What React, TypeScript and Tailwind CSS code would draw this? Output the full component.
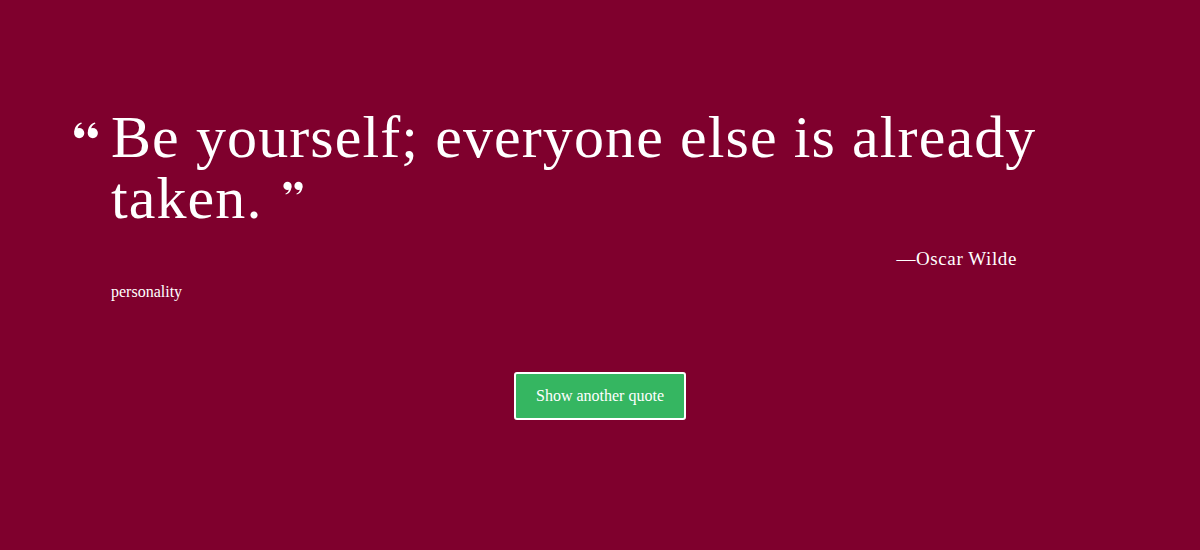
import { useState } from 'react'

const quotes = [
  { text: 'Be yourself; everyone else is already taken.', author: 'Oscar Wilde', tag: 'personality' },
]

function QuoteLeft({ className }: { className?: string }) {
  return (
    <svg viewBox="0 0 32 20" className={className} fill="currentColor">
      <circle cx="8" cy="13" r="6" />
      <path d="M2.2 12.5C2.2 6 5.5 1.6 10.5 0.5l0.6 1.3C7.6 3.2 5.6 6.2 5.8 10z" />
      <circle cx="24" cy="13" r="6" />
      <path d="M18.2 12.5C18.2 6 21.5 1.6 26.5 0.5l0.6 1.3C23.6 3.2 21.6 6.2 21.8 10z" />
    </svg>
  )
}

function QuoteRight({ className }: { className?: string }) {
  return (
    <svg viewBox="0 0 32 20" className={className} fill="currentColor">
      <g transform="rotate(180 16 10)">
        <circle cx="8" cy="13" r="6" />
        <path d="M2.2 12.5C2.2 6 5.5 1.6 10.5 0.5l0.6 1.3C7.6 3.2 5.6 6.2 5.8 10z" />
        <circle cx="24" cy="13" r="6" />
        <path d="M18.2 12.5C18.2 6 21.5 1.6 26.5 0.5l0.6 1.3C23.6 3.2 21.6 6.2 21.8 10z" />
      </g>
    </svg>
  )
}

export default function App() {
  const [i, setI] = useState(0)
  const q = quotes[i]

  return (
    <div className="min-h-[550px] w-full bg-[#7f002d] text-white font-['Liberation_Serif',serif]">
      <div className="pt-[107px] pl-[72px] pr-[160px]">
        <div className="flex items-start gap-[11px]">
          <QuoteLeft className="w-[28px] h-[17px] mt-[15px] shrink-0" />
          <blockquote className="text-[60px] leading-[61px] tracking-[1.1px]">
            Be yourself; everyone else is already
            <br />
            taken.
            <QuoteRight className="inline-block w-[22px] h-[16px] ml-[19px] align-[22px]" />
          </blockquote>
        </div>
        <div className="mt-[16px] pr-[23px] text-right text-[19px] tracking-[0.6px]">—{q.author}</div>
        <div className="mt-[6px] pl-[39px] text-[16px]">{q.tag}</div>
      </div>
      <div className="mt-[68px] flex justify-center">
        <button
          onClick={() => setI((n) => (n + 1) % quotes.length)}
          className="h-[48px] w-[172px] rounded-[3px] border-2 border-white bg-[#35b661] text-[16px] text-white"
        >
          Show another quote
        </button>
      </div>
    </div>
  )
}
